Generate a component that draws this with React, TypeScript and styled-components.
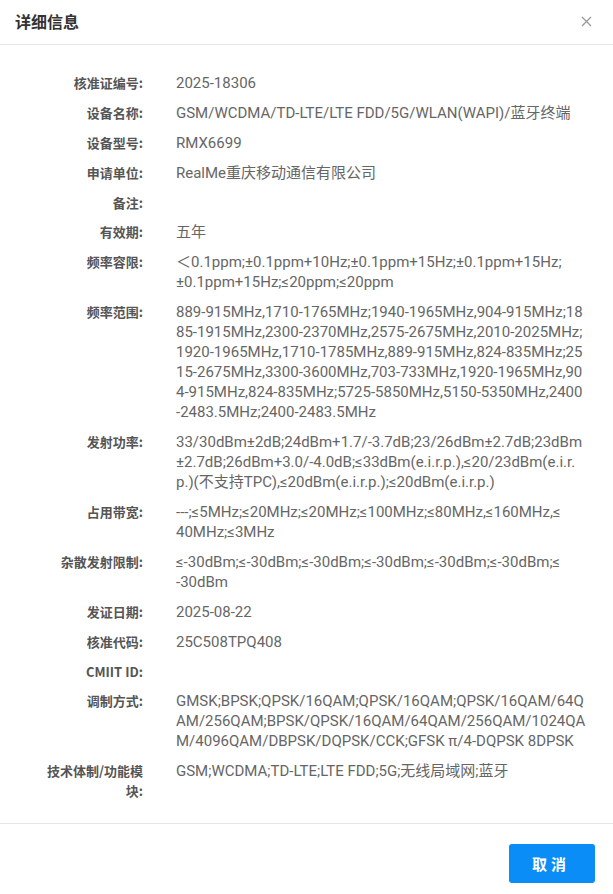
import styled, { createGlobalStyle } from "styled-components";

const GlobalStyle = createGlobalStyle`
  html, body {
    margin: 0;
    padding: 0;
    background: #fff;
  }
  body {
    font-family: "Microsoft YaHei", Roboto, "Noto Sans CJK SC", sans-serif;
  }
`;

const Dialog = styled.div`
  width: 613px;
  height: 894px;
  display: flex;
  flex-direction: column;
  background: #fff;
  box-sizing: border-box;
`;

const Header = styled.div`
  height: 45px;
  box-sizing: border-box;
  display: flex;
  align-items: center;
  justify-content: space-between;
  padding: 0 20px 2px 15px;
  border-bottom: 1px solid #e8e8e8;
`;

const Title = styled.div`
  font-family: "Noto Sans CJK SC", sans-serif;
  font-size: 16px;
  font-weight: 700;
  color: #333;
`;

const Close = styled.button`
  border: 0;
  background: none;
  padding: 0;
  width: 14px;
  height: 14px;
  display: flex;
  align-items: center;
  justify-content: center;
  cursor: pointer;
`;

const Body = styled.div`
  flex: 1;
  padding: 28px 20px 0 43px;
  display: flex;
  flex-direction: column;
  gap: 9.9px;
`;

const Row = styled.div`
  display: flex;
  align-items: flex-start;
  gap: 33px;
`;

const Label = styled.div`
  width: 100px;
  flex-shrink: 0;
  text-align: right;
  font-family: "Noto Sans CJK SC", sans-serif;
  font-size: 13px;
  font-weight: 700;
  color: #555;
  line-height: 20px;
  min-height: 20px;
`;

const Value = styled.div`
  font-family: Roboto, "Noto Sans CJK SC", sans-serif;
  font-size: 15px;
  color: #666;
  line-height: 20px;
  min-height: 20px;
  white-space: pre;
  font-variant-ligatures: none;
`;

const Footer = styled.div`
  border-top: 1px solid #e6e6e6;
  height: 71px;
  box-sizing: border-box;
  display: flex;
  justify-content: flex-end;
  align-items: flex-start;
  padding: 20px 18px 0 0;
`;

const CancelButton = styled.button`
  width: 86px;
  height: 39px;
  border: 0;
  border-radius: 3px;
  background: #0a8df7;
  color: #fff;
  font-family: "Noto Sans CJK SC", sans-serif;
  font-size: 15px;
  font-weight: 700;
  letter-spacing: 4px;
  padding-left: 4px;
  cursor: pointer;
`;

const rows: [string, string][] = [
  ["核准证编号:", "2025-18306"],
  ["设备名称:", "GSM/WCDMA/TD-LTE/LTE FDD/5G/WLAN(WAPI)/蓝牙终端"],
  ["设备型号:", "RMX6699"],
  ["申请单位:", "RealMe重庆移动通信有限公司"],
  ["备注:", ""],
  ["有效期:", "五年"],
  ["频率容限:", "＜0.1ppm;±0.1ppm+10Hz;±0.1ppm+15Hz;±0.1ppm+15Hz;\n±0.1ppm+15Hz;≤20ppm;≤20ppm"],
  [
    "频率范围:",
    "889-915MHz,1710-1765MHz;1940-1965MHz,904-915MHz;18\n85-1915MHz,2300-2370MHz,2575-2675MHz,2010-2025MHz;\n1920-1965MHz,1710-1785MHz,889-915MHz,824-835MHz;25\n15-2675MHz,3300-3600MHz,703-733MHz,1920-1965MHz,90\n4-915MHz,824-835MHz;5725-5850MHz,5150-5350MHz,2400\n-2483.5MHz;2400-2483.5MHz",
  ],
  [
    "发射功率:",
    "33/30dBm±2dB;24dBm+1.7/-3.7dB;23/26dBm±2.7dB;23dBm\n±2.7dB;26dBm+3.0/-4.0dB;≤33dBm(e.i.r.p.),≤20/23dBm(e.i.r.\np.)(不支持TPC),≤20dBm(e.i.r.p.);≤20dBm(e.i.r.p.)",
  ],
  ["占用带宽:", "---;≤5MHz;≤20MHz;≤20MHz;≤100MHz;≤80MHz,≤160MHz,≤\n40MHz;≤3MHz"],
  ["杂散发射限制:", "≤-30dBm;≤-30dBm;≤-30dBm;≤-30dBm;≤-30dBm;≤-30dBm;≤\n-30dBm"],
  ["发证日期:", "2025-08-22"],
  ["核准代码:", "25C508TPQ408"],
  ["CMIIT ID:", ""],
  [
    "调制方式:",
    "GMSK;BPSK;QPSK/16QAM;QPSK/16QAM;QPSK/16QAM/64Q\nAM/256QAM;BPSK/QPSK/16QAM/64QAM/256QAM/1024QA\nM/4096QAM/DBPSK/DQPSK/CCK;GFSK π/4-DQPSK 8DPSK",
  ],
  ["技术体制/功能模块:", "GSM;WCDMA;TD-LTE;LTE FDD;5G;无线局域网;蓝牙"],
];

export default function App() {
  return (
    <>
      <GlobalStyle />
      <Dialog>
        <Header>
          <Title>详细信息</Title>
          <Close aria-label="关闭">
            <svg width="11" height="11" viewBox="0 0 11 11">
              <path d="M1 1L10 10M10 1L1 10" stroke="#999" strokeWidth="1.3" />
            </svg>
          </Close>
        </Header>
        <Body>
          {rows.map(([label, value]) => (
            <Row key={label}>
              <Label>{label}</Label>
              <Value>{value}</Value>
            </Row>
          ))}
        </Body>
        <Footer>
          <CancelButton>取消</CancelButton>
        </Footer>
      </Dialog>
    </>
  );
}
